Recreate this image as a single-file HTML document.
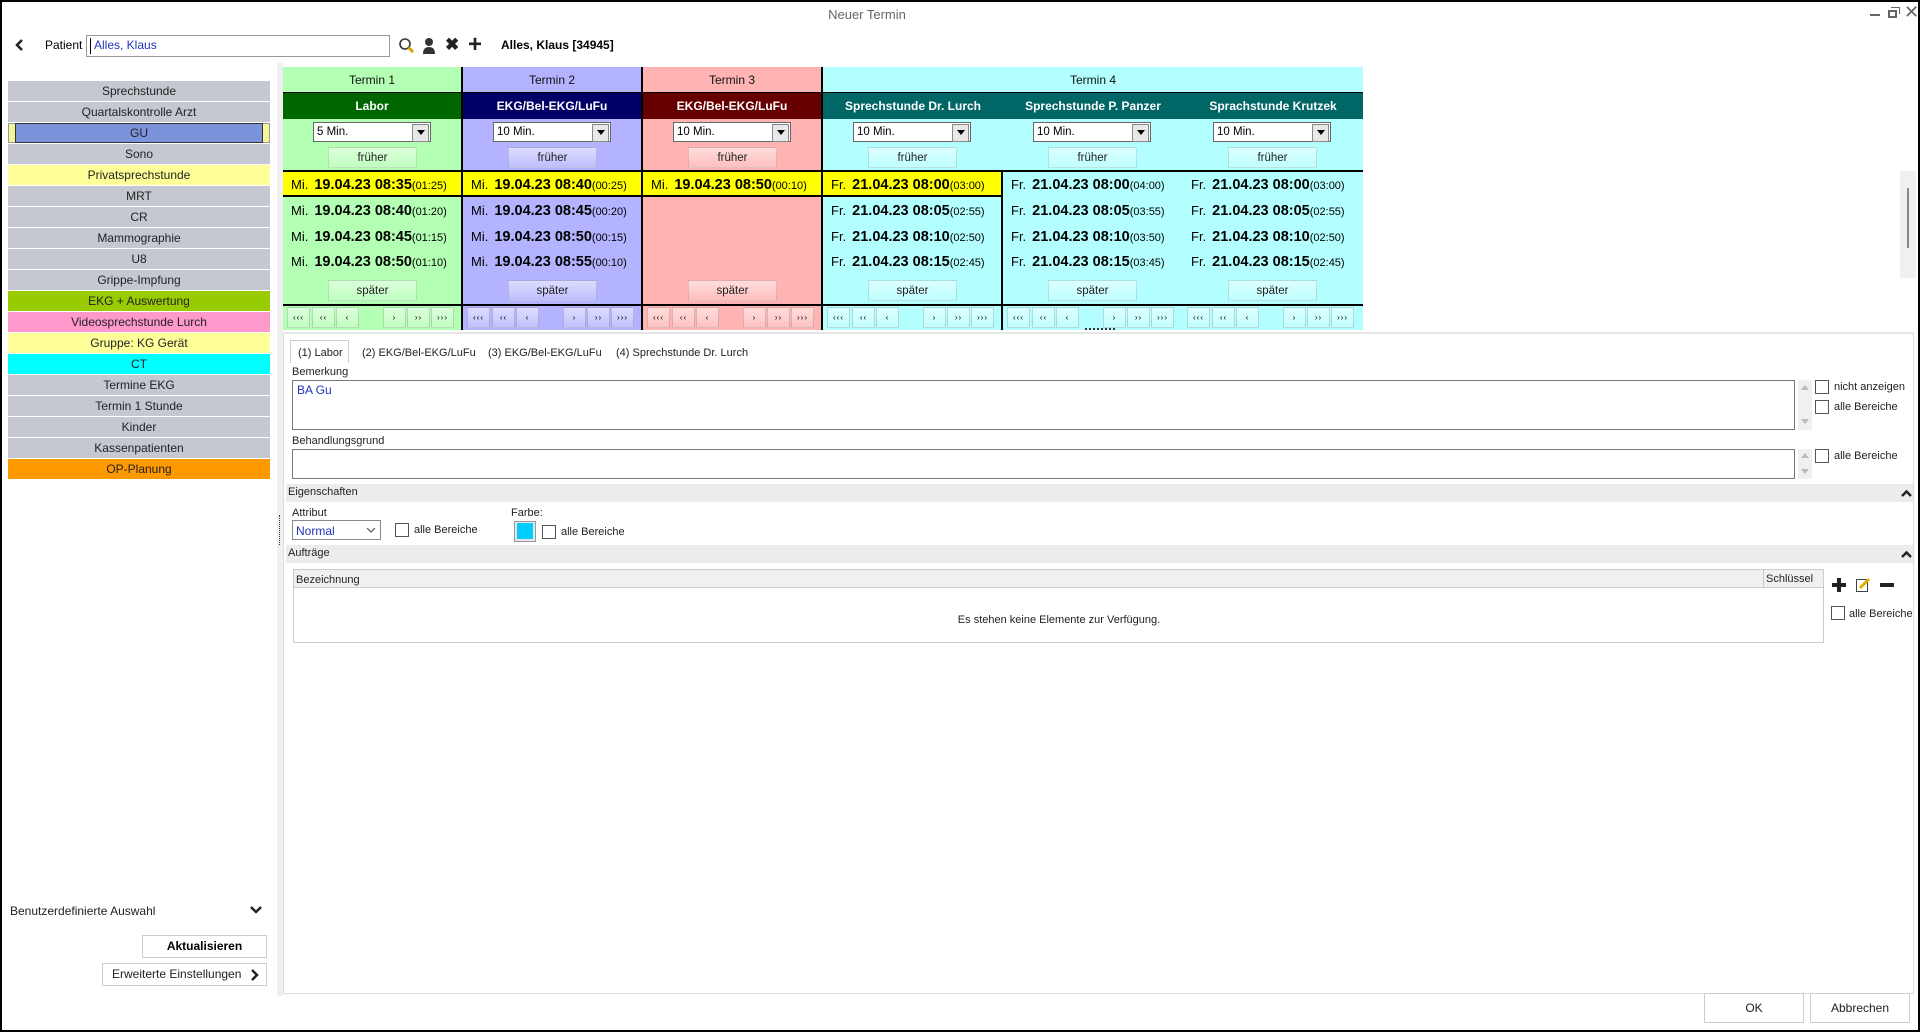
<!DOCTYPE html>
<html><head><meta charset="utf-8"><style>
*{box-sizing:border-box;margin:0;padding:0}
body{width:1920px;height:1032px;background:#fff;font-family:"Liberation Sans",sans-serif;font-size:12px;color:#000;position:relative;overflow:hidden}
.a{position:absolute}
.win{position:absolute;left:0;top:0;width:1920px;height:1032px;border:2px solid #000;border-top-width:2px}
.li{position:absolute;left:8px;width:262px;height:20px;line-height:20px;text-align:center;font-size:12px;color:#222;background:#c5c8d0}
.col{position:absolute;top:67px;height:263px}
.hd{position:absolute;left:0;right:0;top:0;height:26px;line-height:26px;text-align:center;font-size:12px;color:#111;border-bottom:1px solid #000}
.tt{position:absolute;left:0;right:0;top:26px;height:26px;line-height:26px;text-align:center;font-weight:bold;color:#fff;font-size:12px}
.dd{position:absolute;top:55px;left:30px;width:118px;height:20px;background:#fff;border:1px solid #666;font-size:11.5px;line-height:18px;padding-left:3px}
.dd:after{content:"";position:absolute;right:1px;top:1px;width:15px;height:16px;background:#e8e8e8;border:1px solid #888}
.dd i{position:absolute;right:5px;top:7px;width:0;height:0;border-left:4px solid transparent;border-right:4px solid transparent;border-top:5px solid #000;z-index:2}
.bt{position:absolute;left:45px;width:89px;height:21px;line-height:20px;text-align:center;font-size:11.5px;color:#222;border:1px solid rgba(0,0,0,.12);background:linear-gradient(rgba(255,255,255,.55),rgba(255,255,255,.15))}
.bl{position:absolute;left:0;right:0;height:2px;background:#000}
.sl{position:absolute;left:0;right:0;height:25px;line-height:25px;padding-left:8px;font-size:13px;white-space:nowrap}
.sl b{font-size:14.5px;margin-left:6px}
.sl s{text-decoration:none;font-size:11px}
.nv{position:absolute;top:240px;width:23px;height:21px;border:1px solid rgba(0,0,0,.15);background:linear-gradient(rgba(255,255,255,.55),rgba(255,255,255,.2));font-size:8px;text-align:center;line-height:19px;letter-spacing:1px}
.cb{position:absolute;width:14px;height:14px;border:1px solid #555;background:#fff}
.lb{position:absolute;font-size:12px;color:#222;white-space:nowrap}
.tb{position:absolute;font-size:11px;color:#222;white-space:nowrap}
</style></head><body>
<div class="win"></div>
<div class="a" style="left:0;top:7px;width:1734px;text-align:center;font-size:13px;color:#666">Neuer Termin</div>
<div class="a" style="left:1870px;top:14px;width:10px;height:2px;background:#666"></div>
<div class="a" style="left:1888px;top:10px;width:9px;height:8px;border:2px solid #666"></div>
<div class="a" style="left:1891px;top:7px;width:9px;height:7px;border-top:1px solid #666;border-right:1px solid #666"></div>
<div class="a" style="left:1904px;top:2px;font-size:18px;color:#666">✕</div>
<svg class="a" style="left:14px;top:38px" width="10" height="14" viewBox="0 0 10 14"><path d="M8 2 L3 7 L8 12" fill="none" stroke="#222" stroke-width="2.5"/></svg>
<div class="a" style="left:45px;top:38px;font-size:12px">Patient</div>
<div class="a" style="left:86px;top:35px;width:304px;height:22px;border:1px solid #999;background:#fff"></div>
<div class="a" style="left:90px;top:38px;width:1px;height:16px;background:#000"></div>
<div class="a" style="left:94px;top:38px;font-size:12px;color:#2233bb">Alles, Klaus</div>
<svg class="a" style="left:398px;top:37px" width="18" height="18" viewBox="0 0 18 18"><circle cx="7" cy="7" r="5" fill="none" stroke="#333" stroke-width="1.6"/><path d="M10.5 10.5 L15 15" stroke="#d8a000" stroke-width="3"/></svg>
<svg class="a" style="left:422px;top:37px" width="14" height="18" viewBox="0 0 14 18"><circle cx="7" cy="5" r="4" fill="#333"/><path d="M1 17 Q1 10 7 10 Q13 10 13 17Z" fill="#333"/></svg>
<div class="a" style="left:445px;top:35px;font-size:17px;font-weight:bold;color:#222">✖</div>
<div class="a" style="left:468px;top:31px;font-size:24px;font-weight:bold;color:#222">+</div>
<div class="a" style="left:501px;top:38px;font-size:12px;font-weight:bold">Alles, Klaus [34945]</div>

<div class="li" style="top:81px">Sprechstunde</div>
<div class="li" style="top:102px">Quartalskontrolle Arzt</div>
<div class="li" style="top:123px;background:#f4f49a;border:1px solid #999"><div class="a" style="left:6px;right:6px;top:-1px;bottom:-1px;background:#7b93db;border:1px solid #333;line-height:18px">GU</div></div>
<div class="li" style="top:144px">Sono</div>
<div class="li" style="top:165px;background:#ffff99">Privatsprechstunde</div>
<div class="li" style="top:186px">MRT</div>
<div class="li" style="top:207px">CR</div>
<div class="li" style="top:228px">Mammographie</div>
<div class="li" style="top:249px">U8</div>
<div class="li" style="top:270px">Grippe-Impfung</div>
<div class="li" style="top:291px;background:#99cc00">EKG + Auswertung</div>
<div class="li" style="top:312px;background:#ff99cc">Videosprechstunde Lurch</div>
<div class="li" style="top:333px;background:#ffff99">Gruppe: KG Gerät</div>
<div class="li" style="top:354px;background:#00ffff">CT</div>
<div class="li" style="top:375px">Termine EKG</div>
<div class="li" style="top:396px">Termin 1 Stunde</div>
<div class="li" style="top:417px">Kinder</div>
<div class="li" style="top:438px">Kassenpatienten</div>
<div class="li" style="top:459px;background:#ff9900">OP-Planung</div>

<div class="a" style="left:10px;top:904px;font-size:12px;color:#222">Benutzerdefinierte Auswahl</div>
<svg class="a" style="left:249px;top:905px" width="14" height="10" viewBox="0 0 14 10"><path d="M2 2 L7 7 L12 2" fill="none" stroke="#222" stroke-width="2.5"/></svg>
<div class="a" style="left:142px;top:935px;width:125px;height:23px;border:1px solid #ccc;text-align:center;line-height:21px;font-weight:bold;font-size:12px">Aktualisieren</div>
<div class="a" style="left:102px;top:963px;width:165px;height:23px;border:1px solid #ccc;line-height:21px;padding-left:9px;font-size:12px;color:#222">Erweiterte Einstellungen</div>
<svg class="a" style="left:250px;top:968px" width="10" height="14" viewBox="0 0 10 14"><path d="M2 2 L7 7 L2 12" fill="none" stroke="#222" stroke-width="2.5"/></svg>

<div class="a" style="left:277px;top:63px;width:6px;height:933px;background:#f0f0f0"></div>
<div class="a" style="left:279px;top:515px;width:1px;height:30px;border-left:1px dotted #333"></div>

<div class="col" style="left:283px;width:180px;background:#b3ffb3;border-right:2px solid #000">
<div class="hd">Termin 1</div><div class="tt" style="background:#006600">Labor</div>
<div class="dd">5 Min.<i></i></div><div class="bt" style="top:80px">früher</div>
<div class="bl" style="top:103px"></div>
<div class="sl" style="top:105px;background:#ffff00;border-bottom:2px solid #000">Mi.<b>19.04.23 08:35</b><s>(01:25)</s></div>
<div class="sl" style="top:131px">Mi.<b>19.04.23 08:40</b><s>(01:20)</s></div>
<div class="sl" style="top:157px">Mi.<b>19.04.23 08:45</b><s>(01:15)</s></div>
<div class="sl" style="top:182px">Mi.<b>19.04.23 08:50</b><s>(01:10)</s></div>
<div class="bt" style="top:213px">später</div><div class="bl" style="top:237px"></div>
<div class="nv" style="left:4px">‹‹‹</div><div class="nv" style="left:29px">‹‹</div><div class="nv" style="left:53px">‹</div><div class="nv" style="left:100px">›</div><div class="nv" style="left:124px">››</div><div class="nv" style="left:148px">›››</div>
</div>
<div class="col" style="left:463px;width:180px;background:#b3b3ff;border-right:2px solid #000">
<div class="hd">Termin 2</div><div class="tt" style="background:#000066">EKG/Bel-EKG/LuFu</div>
<div class="dd">10 Min.<i></i></div><div class="bt" style="top:80px">früher</div>
<div class="bl" style="top:103px"></div>
<div class="sl" style="top:105px;background:#ffff00;border-bottom:2px solid #000">Mi.<b>19.04.23 08:40</b><s>(00:25)</s></div>
<div class="sl" style="top:131px">Mi.<b>19.04.23 08:45</b><s>(00:20)</s></div>
<div class="sl" style="top:157px">Mi.<b>19.04.23 08:50</b><s>(00:15)</s></div>
<div class="sl" style="top:182px">Mi.<b>19.04.23 08:55</b><s>(00:10)</s></div>
<div class="bt" style="top:213px">später</div><div class="bl" style="top:237px"></div>
<div class="nv" style="left:4px">‹‹‹</div><div class="nv" style="left:29px">‹‹</div><div class="nv" style="left:53px">‹</div><div class="nv" style="left:100px">›</div><div class="nv" style="left:124px">››</div><div class="nv" style="left:148px">›››</div>
</div>
<div class="col" style="left:643px;width:180px;background:#ffb3b3;border-right:2px solid #000">
<div class="hd">Termin 3</div><div class="tt" style="background:#660000">EKG/Bel-EKG/LuFu</div>
<div class="dd">10 Min.<i></i></div><div class="bt" style="top:80px">früher</div>
<div class="bl" style="top:103px"></div>
<div class="sl" style="top:105px;background:#ffff00;border-bottom:2px solid #000">Mi.<b>19.04.23 08:50</b><s>(00:10)</s></div>
<div class="bt" style="top:213px">später</div><div class="bl" style="top:237px"></div>
<div class="nv" style="left:4px">‹‹‹</div><div class="nv" style="left:29px">‹‹</div><div class="nv" style="left:53px">‹</div><div class="nv" style="left:100px">›</div><div class="nv" style="left:124px">››</div><div class="nv" style="left:148px">›››</div>
</div>
<div class="col" style="left:823px;width:540px;background:#b3ffff">
<div class="hd">Termin 4</div><div class="tt" style="background:#006666"></div>
<div class="bl" style="top:103px"></div><div class="bl" style="top:237px"></div>
<div class="a" style="left:178px;top:103px;width:2px;height:160px;background:#000"></div>
</div>
<div class="col" style="left:823px;width:180px">
<div class="tt" style="background:transparent">Sprechstunde Dr. Lurch</div>
<div class="dd">10 Min.<i></i></div><div class="bt" style="top:80px">früher</div>
<div class="sl" style="top:105px;background:#ffff00;border-bottom:2px solid #000;right:2px">Fr.<b>21.04.23 08:00</b><s>(03:00)</s></div>
<div class="sl" style="top:131px">Fr.<b>21.04.23 08:05</b><s>(02:55)</s></div>
<div class="sl" style="top:157px">Fr.<b>21.04.23 08:10</b><s>(02:50)</s></div>
<div class="sl" style="top:182px">Fr.<b>21.04.23 08:15</b><s>(02:45)</s></div>
<div class="bt" style="top:213px">später</div>
<div class="nv" style="left:4px">‹‹‹</div><div class="nv" style="left:29px">‹‹</div><div class="nv" style="left:53px">‹</div><div class="nv" style="left:100px">›</div><div class="nv" style="left:124px">››</div><div class="nv" style="left:148px">›››</div>
</div>
<div class="col" style="left:1003px;width:180px">
<div class="tt" style="background:transparent">Sprechstunde P. Panzer</div>
<div class="dd">10 Min.<i></i></div><div class="bt" style="top:80px">früher</div>
<div class="sl" style="top:105px">Fr.<b>21.04.23 08:00</b><s>(04:00)</s></div>
<div class="sl" style="top:131px">Fr.<b>21.04.23 08:05</b><s>(03:55)</s></div>
<div class="sl" style="top:157px">Fr.<b>21.04.23 08:10</b><s>(03:50)</s></div>
<div class="sl" style="top:182px">Fr.<b>21.04.23 08:15</b><s>(03:45)</s></div>
<div class="bt" style="top:213px">später</div>
<div class="nv" style="left:4px">‹‹‹</div><div class="nv" style="left:29px">‹‹</div><div class="nv" style="left:53px">‹</div><div class="nv" style="left:100px">›</div><div class="nv" style="left:124px">››</div><div class="nv" style="left:148px">›››</div>
</div>
<div class="col" style="left:1183px;width:180px">
<div class="tt" style="background:transparent">Sprachstunde Krutzek</div>
<div class="dd">10 Min.<i></i></div><div class="bt" style="top:80px">früher</div>
<div class="sl" style="top:105px">Fr.<b>21.04.23 08:00</b><s>(03:00)</s></div>
<div class="sl" style="top:131px">Fr.<b>21.04.23 08:05</b><s>(02:55)</s></div>
<div class="sl" style="top:157px">Fr.<b>21.04.23 08:10</b><s>(02:50)</s></div>
<div class="sl" style="top:182px">Fr.<b>21.04.23 08:15</b><s>(02:45)</s></div>
<div class="bt" style="top:213px">später</div>
<div class="nv" style="left:4px">‹‹‹</div><div class="nv" style="left:29px">‹‹</div><div class="nv" style="left:53px">‹</div><div class="nv" style="left:100px">›</div><div class="nv" style="left:124px">››</div><div class="nv" style="left:148px">›››</div>
</div>
<div class="a" style="left:1085px;top:328px;width:30px;height:2px;border-top:2px dotted #333"></div>

<div class="a" style="left:1900px;top:171px;width:16px;height:107px;background:#f0f0f0"></div>
<div class="a" style="left:1907px;top:188px;width:2px;height:60px;background:#888"></div>

<div class="a" style="left:283px;top:332px;width:1631px;height:662px;border:1px solid #ddd;border-top:2px solid #e6e6e6"></div>
<div class="a" style="left:290px;top:340px;width:59px;height:23px;border:1px solid #ccc;border-bottom:0"></div>
<div class="tb" style="left:298px;top:347px">(1) Labor</div>
<div class="tb" style="left:362px;top:347px">(2) EKG/Bel-EKG/LuFu</div>
<div class="tb" style="left:488px;top:347px">(3) EKG/Bel-EKG/LuFu</div>
<div class="tb" style="left:616px;top:347px">(4) Sprechstunde Dr. Lurch</div>
<div class="tb" style="left:292px;top:366px">Bemerkung</div>
<div class="a" style="left:292px;top:380px;width:1503px;height:50px;border:1px solid #777"></div>
<div class="lb" style="left:297px;top:383px;color:#2233bb">BA Gu</div>
<div class="a" style="left:1798px;top:380px;width:14px;height:50px;background:#f0f0f0"></div>
<div class="a" style="left:1801px;top:385px;border-left:4px solid transparent;border-right:4px solid transparent;border-bottom:5px solid #bbb"></div>
<div class="a" style="left:1801px;top:419px;border-left:4px solid transparent;border-right:4px solid transparent;border-top:5px solid #bbb"></div>
<div class="cb" style="left:1815px;top:380px"></div><div class="tb" style="left:1834px;top:381px">nicht anzeigen</div>
<div class="cb" style="left:1815px;top:400px"></div><div class="tb" style="left:1834px;top:401px">alle Bereiche</div>
<div class="tb" style="left:292px;top:435px">Behandlungsgrund</div>
<div class="a" style="left:292px;top:449px;width:1503px;height:30px;border:1px solid #777"></div>
<div class="a" style="left:1798px;top:449px;width:14px;height:30px;background:#f0f0f0"></div>
<div class="a" style="left:1801px;top:453px;border-left:4px solid transparent;border-right:4px solid transparent;border-bottom:5px solid #bbb"></div>
<div class="a" style="left:1801px;top:469px;border-left:4px solid transparent;border-right:4px solid transparent;border-top:5px solid #bbb"></div>
<div class="cb" style="left:1815px;top:449px"></div><div class="tb" style="left:1834px;top:450px">alle Bereiche</div>

<div class="a" style="left:286px;top:484px;width:1627px;height:18px;background:#ececec"></div>
<div class="tb" style="left:288px;top:486px">Eigenschaften</div>
<svg class="a" style="left:1900px;top:489px" width="13" height="9" viewBox="0 0 13 9"><path d="M2 7 L6.5 2.5 L11 7" fill="none" stroke="#222" stroke-width="2.4"/></svg>
<div class="tb" style="left:292px;top:507px">Attribut</div>
<div class="a" style="left:292px;top:520px;width:89px;height:20px;border:1px solid #888;background:#fff"></div>
<div class="lb" style="left:296px;top:524px;color:#2233bb">Normal</div>
<svg class="a" style="left:366px;top:527px" width="10" height="7" viewBox="0 0 10 7"><path d="M1 1 L5 5 L9 1" fill="none" stroke="#555" stroke-width="1.2"/></svg>
<div class="cb" style="left:395px;top:523px"></div><div class="tb" style="left:414px;top:524px">alle Bereiche</div>
<div class="tb" style="left:511px;top:507px">Farbe:</div>
<div class="a" style="left:514px;top:521px;width:22px;height:21px;border:1px solid #999;background:#e5e5e5"></div>
<div class="a" style="left:517px;top:523px;width:16px;height:16px;background:#00ccff"></div>
<div class="cb" style="left:542px;top:525px"></div><div class="tb" style="left:561px;top:526px">alle Bereiche</div>

<div class="a" style="left:286px;top:545px;width:1627px;height:18px;background:#ececec"></div>
<div class="tb" style="left:288px;top:547px">Aufträge</div>
<svg class="a" style="left:1900px;top:550px" width="13" height="9" viewBox="0 0 13 9"><path d="M2 7 L6.5 2.5 L11 7" fill="none" stroke="#222" stroke-width="2.4"/></svg>
<div class="a" style="left:293px;top:569px;width:1531px;height:74px;border:1px solid #ccc"></div>
<div class="a" style="left:294px;top:570px;width:1529px;height:18px;background:#f0f0f0;border-bottom:1px solid #ccc"></div>
<div class="a" style="left:1763px;top:570px;width:1px;height:18px;background:#ccc"></div>
<div class="tb" style="left:296px;top:574px">Bezeichnung</div>
<div class="tb" style="left:1766px;top:573px">Schlüssel</div>
<div class="tb" style="left:0;width:2118px;text-align:center;top:614px">Es stehen keine Elemente zur Verfügung.</div>
<div class="a" style="left:1832px;top:583px;width:14px;height:4px;background:#222"></div>
<div class="a" style="left:1837px;top:578px;width:4px;height:14px;background:#222"></div>
<svg class="a" style="left:1855px;top:576px" width="16" height="17" viewBox="0 0 16 17"><rect x="1.5" y="3.5" width="11" height="12" fill="#fff" stroke="#444"/><path d="M5 12 L14 3" stroke="#e0b000" stroke-width="3"/></svg>
<div class="a" style="left:1880px;top:583px;width:14px;height:4px;background:#222"></div>
<div class="cb" style="left:1831px;top:606px"></div><div class="tb" style="left:1849px;top:608px">alle Bereiche</div>

<div class="a" style="left:1704px;top:993px;width:100px;height:30px;border:1px solid #ccc;text-align:center;line-height:28px;font-size:12px;color:#222">OK</div>
<div class="a" style="left:1810px;top:993px;width:100px;height:30px;border:1px solid #ccc;text-align:center;line-height:28px;font-size:12px;color:#222">Abbrechen</div>
</body></html>
